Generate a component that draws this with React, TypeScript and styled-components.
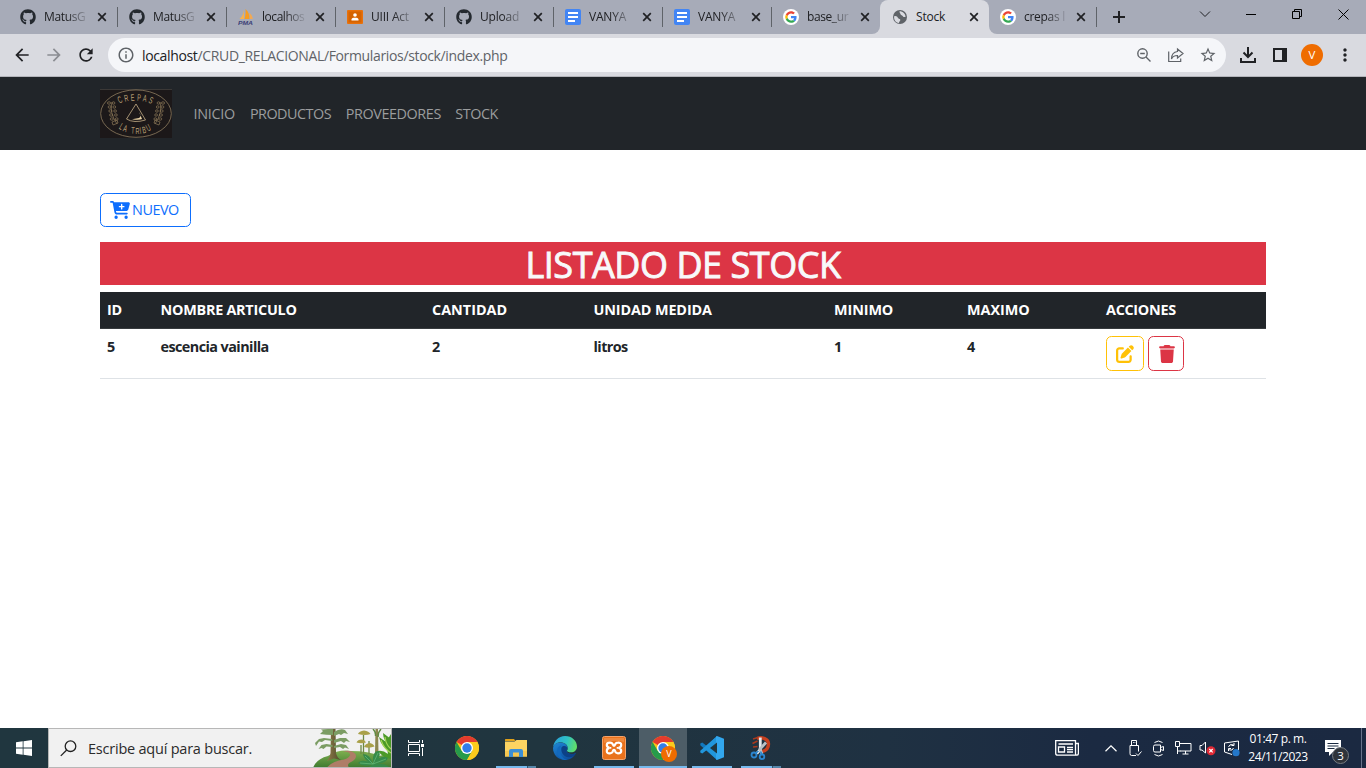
import React from 'react';
import styled, { createGlobalStyle, css } from 'styled-components';
import { FaGithub, FaCartPlus, FaPenToSquare, FaTrash } from 'react-icons/fa6';
import {
  MdArrowBack, MdArrowForward, MdRefresh, MdInfoOutline, MdStarBorder, MdMoreVert,
} from 'react-icons/md';

const GlobalStyle = createGlobalStyle`
  *, *::before, *::after { box-sizing: border-box; }
  html, body { margin: 0; padding: 0; }
  body {
    width: 1366px; height: 768px; overflow: hidden; background: #fff; color: #212529;
    font-family: "Open Sans", "Noto Sans", sans-serif;
  }
  svg { display: block; flex: none; }
`;

const Screen = styled.div`
  width: 1366px; height: 768px; display: flex; flex-direction: column; overflow: hidden;
`;

/* Browser chrome */
const TabStrip = styled.div`
  height: 34px; flex: none; display: flex; background: #d9dae0;
`;
const TabGroup = styled.div<{ $side?: 'left' | 'right' }>`
  display: flex; height: 34px; background: #a7abb8;
  ${p => p.$side === 'left' && css`width: 880px; padding-left: 9px; border-bottom-right-radius: 8px;`}
  ${p => p.$side === 'right' && css`flex: 1; border-bottom-left-radius: 8px;`}
`;
const TabItem = styled.div<{ $active?: boolean; $divider?: boolean; $last?: boolean }>`
  width: ${p => (p.$last ? 108 : 109)}px; height: 34px; padding: 0 9px 0 11px; display: flex; align-items: center; flex: none;
  color: #202124;
  background: ${p => (p.$active ? '#d9dae0' : 'transparent')};
  ${p => p.$active && css`border-radius: 8px 8px 0 0; padding-left: 12px;`}
  ${p => p.$divider && css`
    background: linear-gradient(#5f6369, #5f6369) right 7px / 1px 20px no-repeat;
  `}
`;
const ActiveBacking = styled.div`
  height: 34px; background: linear-gradient(#a7abb8 0 10px, #d9dae0 10px);
`;
const TabTitle = styled.span<{ $ls?: number; $w?: number }>`
  width: ${p => p.$w ?? 44}px; margin-left: 8px; white-space: nowrap; font-size: 12px; line-height: 20px;
  letter-spacing: ${p => p.$ls ?? -0.2}px;
  mask-image: linear-gradient(90deg, #000 50%, rgba(0, 0, 0, 0.15) 96%);
`;
const PlainTitle = styled(TabTitle)` mask-image: none; `;
const CloseSvg = styled.svg` margin-left: 8px; `;
const NewTab = styled.div` width: 44px; display: grid; place-items: center; `;
const WindowControls = styled.div`
  display: flex; margin-left: auto; height: 28px;
  & > span { width: 46px; display: grid; place-items: center; }
`;

const Toolbar = styled.div`
  height: 43px; flex: none; display: flex; align-items: center; background: #d9dae0;
  border-bottom: 1px solid #b3b4ba; padding: 0 11px 0 12px; color: #202124;
`;
const NavIcons = styled.div` display: flex; gap: 12px; width: 96px; `;
const Omnibox = styled.div`
  width: 1118px; height: 34px; border-radius: 17px; background: #f5f6f9; display: flex; align-items: center;
  padding: 0 9px 0 9px; color: #5f6368;
`;
const Url = styled.span`
  flex: 1; margin-left: 7px; padding-top: 1px; font-size: 14px; line-height: 20px; letter-spacing: -0.35px; white-space: nowrap;
  b { font-weight: 400; color: #202124; }
`;
const OmniActions = styled.div` display: flex; gap: 14px; `;
const BarActions = styled.div` display: flex; flex: 1; align-items: center; margin-left: 14px; `;
const PanelIcon = styled.svg` margin-left: 17px; `;
const Avatar = styled.span`
  width: 22px; height: 22px; margin: 0 auto 0 14px; border-radius: 50%; background: #ef6c00; color: #fff;
  font-size: 11.5px; line-height: 22px; text-align: center;
`;

/* Page */
const Navbar = styled.nav`
  height: 73px; flex: none; display: flex; align-items: center; padding: 0 100px; background: #212529;
`;
const NavLinks = styled.div` display: flex; margin-left: 21.5px; gap: 14.4px; `;
const NavLink = styled.a<{ $w: number; $ls: number }>`
  width: ${p => p.$w}px; white-space: nowrap; color: #9b9d9e; font-size: 14.4px; line-height: 22px; letter-spacing: ${p => p.$ls}px;
`;
const Main = styled.main` flex: 1; padding: 43px 100px 0; background: #fff; `;
const Button = styled.button<{ $tone: string; $w: number; $h: number }>`
  display: inline-flex; align-items: center; justify-content: flex-start; gap: 2px;
  width: ${p => p.$w}px; height: ${p => p.$h}px; padding: 0 0 0 9px; background: transparent;
  color: ${p => p.$tone}; border: 1px solid ${p => p.$tone}; border-radius: 5.4px;
  font: 400 14.4px/22px "Open Sans", sans-serif; letter-spacing: -0.45px;
`;
const Heading = styled.h1`
  margin: 15px 0 7px; height: 43px; background: #dc3545; color: #f8f9fa; text-align: center;
  font-size: 36px; line-height: 46px; font-weight: 500; letter-spacing: -0.45px;
  -webkit-text-stroke: 0.9px #f8f9fa;
`;
const Table = styled.div` width: 1166px; font-size: 14.4px; font-weight: 700; line-height: 22px; `;
const Row = styled.div<{ $head?: boolean }>`
  display: grid; grid-template-columns: 53.5px 271.5px 161.5px 240.5px 133px 139px 1fr;
  height: ${p => (p.$head ? 37 : 50)}px; padding-top: 7px;
  background: ${p => (p.$head ? '#212529' : '#fff')};
  color: ${p => (p.$head ? '#fff' : '#212529')};
  border-bottom: 1px solid ${p => (p.$head ? '#373b3e' : '#dee2e6')};
`;
const Cell = styled.div<{ $ls?: number }>`
  padding-left: 7px; white-space: nowrap; letter-spacing: ${p => p.$ls ?? -0.22}px;
`;
const Actions = styled(Cell)` display: flex; gap: 4px; `;

/* Taskbar */
const Taskbar = styled.footer`
  height: 40px; flex: none; display: flex; color: #fff;
  background: linear-gradient(90deg, #20363f 0, #20353f 40%, #1f3142 65%, #1b2a42 80%, #1b2941 100%);
`;
const StartButton = styled.div` width: 48px; display: grid; place-items: center; `;
const SearchBox = styled.div`
  width: 344px; height: 40px; display: flex; align-items: center; background: #f1f1f1; color: #2b2b2b;
  border: 1px solid #b7b7b7; padding-left: 11px; font-size: 14.5px; letter-spacing: -0.22px;
  span { flex: 1; margin-left: 11px; white-space: nowrap; }
`;
const TaskButton = styled.div<{ $line?: 'full' | 'wide' | 'multi'; $active?: boolean }>`
  width: 48px; margin-right: 1px; height: 40px; display: grid; place-items: center;
  background-color: ${p => (p.$active ? '#4d5d67' : 'transparent')};
  background-repeat: no-repeat;
  ${p => p.$line === 'full' && css`
    background-image: linear-gradient(#76b9ed, #76b9ed); background-position: 0 38px; background-size: 48px 2px;`}
  ${p => p.$line === 'wide' && css`
    background-image: linear-gradient(#76b9ed, #76b9ed); background-position: 4px 38px; background-size: 40px 2px;`}
  ${p => p.$line === 'multi' && css`
    background-image: linear-gradient(90deg, #76b9ed 31px, #33536a 31px 32px, #5586a9 32px);
    background-position: 4px 38px; background-size: 40px 2px;`}
`;
const TaskView = styled(TaskButton)` margin-right: 3px; `;
const BadgedIcon = styled.div` position: relative; `;
const ProfileBadge = styled.span`
  position: absolute; left: 10px; top: 10px; width: 16px; height: 16px; border-radius: 50%; background: #ef6c00;
  font-size: 9px; line-height: 16px; text-align: center;
`;
const Tray = styled.div` margin-left: auto; display: flex; align-items: center; `;
const TrayIcon = styled.span<{ $w?: number }>` width: ${p => p.$w ?? 24}px; display: grid; place-items: center; `;
const Clock = styled.div`
  width: 70px; text-align: center; font-size: 12px; line-height: 18px; letter-spacing: -0.42px; white-space: nowrap;
`;
const Notice = styled.div` position: relative; width: 48px; height: 40px; padding: 12px 0 0 12px; `;
const NoticeCount = styled.span`
  position: absolute; left: 19px; top: 19px; width: 17px; height: 17px; border-radius: 50%;
  background: #2f343b; border: 1px solid #777c82; font-size: 11.5px; line-height: 15px; text-align: center;
`;
const ShowDesktop = styled.div` width: 5px; height: 40px; border-left: 1px solid #68738a; `;

/* Icons */
const CloseIcon = () => (
  <CloseSvg width="12" height="12" viewBox="0 0 12 12">
    <path d="M2.200 2.200l7.600 7.600M9.800 2.200 2.200 9.800" stroke="#202124" strokeWidth="1.700" />
  </CloseSvg>
);
const GlobeIcon = () => (
  <svg width="16" height="16" viewBox="0 0 16 16">
    <circle cx="8" cy="8" r="7" fill="#5f6368" />
    <path d="M2.200 7.200C4 6.500 5.500 7.500 6 9c.5 1.200 2.500.5 2.300 2.200-.2 1.300-1.500 1.300-1.300 2.800-3.300-.4-5.400-3.300-4.800-6.800z" fill="#d9dae0" />
    <path d="M7.500 2.200c-.2 1.800 1 2 1.200 3.200.1 1 1.800.6 2.200 1.800.3.900 1.500 1 2.700.6-.2-3-2.600-5.600-6.100-5.600z" fill="#d9dae0" />
  </svg>
);
const GoogleIcon = () => (
  <svg width="16" height="16" viewBox="0 0 16 16">
    <circle cx="8" cy="8" r="8" fill="#fff" />
    <g transform="translate(2.2 2.2) scale(.242)">
      <path fill="#EA4335" d="M24 9.500c3.500 0 6.700 1.200 9.200 3.600l6.900-6.900C35.900 2.400 30.500 0 24 0 14.600 0 6.500 5.400 2.600 13.200l8 6.200C12.400 13.700 17.700 9.500 24 9.500z" />
      <path fill="#4285F4" d="M47 24.600c0-1.600-.2-3.100-.4-4.600H24v9h12.900c-.6 3-2.300 5.500-4.800 7.200l7.700 6C44.400 38 47 31.800 47 24.600z" />
      <path fill="#FBBC05" d="M10.500 28.600a14.500 14.500 0 0 1 0-9.200l-8-6.200a24 24 0 0 0 0 21.600l8-6.200z" />
      <path fill="#34A853" d="M24 48c6.500 0 11.900-2.100 15.900-5.800l-7.700-6c-2.200 1.500-4.900 2.300-8.200 2.300-6.300 0-11.600-4.200-13.500-9.900l-8 6.200C6.500 42.600 14.600 48 24 48z" />
    </g>
  </svg>
);
const DocsIcon = () => (
  <svg width="16" height="16" viewBox="0 0 16 16">
    <rect width="16" height="16" rx="2" fill="#4285f4" />
    <path d="M3 4h10M3 8h10M3 12h7" stroke="#fff" strokeWidth="2" />
  </svg>
);
const ClassroomIcon = () => (
  <svg width="16" height="16" viewBox="0 0 16 16">
    <rect y="1" width="16" height="14" rx="1" fill="#e8710a" />
    <rect x="1.500" y="2.500" width="13" height="11" fill="#d56300" />
    <circle cx="8" cy="6" r="1.800" fill="#fff" />
    <path d="M4.500 11.500v-1C4.500 9 6 8.700 8 8.700s3.500.3 3.500 1.800v1z" fill="#fff" />
  </svg>
);
const PmaIcon = () => (
  <svg width="16" height="16" viewBox="0 0 16 16">
    <path d="M6 1v9H1.500C4 8 5.300 5 6 1z" fill="#f6b24e" />
    <path d="M7.500 0c3 2.500 4 6 4 10h-5c1-3 1.300-6.500 1-10z" fill="#f89c1e" />
    <path d="M11 4c2.500 1 3.500 3.500 3.800 6H12c.2-2-.1-4-1-6z" fill="#f3a953" />
    <text x="0" y="15.500" fontSize="6" fontWeight="700" fontStyle="italic" fill="#3b3f77" textLength="15" lengthAdjust="spacingAndGlyphs" fontFamily="Liberation Sans, sans-serif">PMA</text>
  </svg>
);
const ChromeIcon = () => (
  <svg width="24" height="24" viewBox="0 0 24 24">
    <circle cx="12" cy="12" r="12" fill="#fbc116" />
    <path d="M12 12 1.600 6A12 12 0 0 1 22.400 6z" fill="#e33b2e" />
    <path d="M1.600 6A12 12 0 0 0 12 24l5.200-9L12 12 6.800 15z" fill="#269b4b" />
    <path d="M12 6h10.400A12 12 0 0 1 12 24l5.200-9z" fill="#fccb1d" />
    <circle cx="12" cy="12" r="6" fill="#fff" />
    <circle cx="12" cy="12" r="4.700" fill="#327de8" />
  </svg>
);
const FolderIcon = () => (
  <svg width="22" height="20" viewBox="0 0 22 20">
    <path d="M0 1.500Q0 1 .5 1H9l1.500 2H0z" fill="#e0a11a" />
    <path d="M0 3.500h9.500L11.500 2H22v16.500H0z" fill="#fcd462" />
    <path d="M0 13h22v5.500H0z" fill="#f6c750" />
    <path d="M4 19v-6q0-2 2-2h10q2 0 2 2v6h-4v-4.500H8V19z" fill="#3c8fd6" />
  </svg>
);
const EdgeIcon = () => (
  <svg width="24" height="24" viewBox="0 0 24 24">
    <defs>
      <linearGradient id="edgeTop" x1="0" y1=".3" x2="1" y2=".5">
        <stop offset="0" stopColor="#289fdc" /><stop offset=".55" stopColor="#2fc2c4" /><stop offset="1" stopColor="#62df66" />
      </linearGradient>
      <linearGradient id="edgeLow" x1="0" y1="0" x2=".7" y2="1">
        <stop offset="0" stopColor="#1f87d6" /><stop offset="1" stopColor="#0c4c9c" />
      </linearGradient>
    </defs>
    <path d="M0 12C1 7.500 5 6 8.500 6.500 12 7 14.500 9 14.500 12c0 1-1 1.700-1 2.800 0 2 2.500 3.200 5.500 3.200 1.500 0 3-.5 4-1C20.500 21.500 17 24 12 24 5 24 0 18.500 0 12z" fill="url(#edgeLow)" />
    <path d="M8.500 9.500C5.500 13 7 22 14 23.800 8 25 3.500 20 4 14.500 4.300 11.500 6 9.800 8.500 9.500z" fill="#1269bd" />
    <path d="M8.500 11.500c-1 4 1.500 9.500 7.500 9.700 3 .1 5.500-1.200 7-4.200-1 .5-2.500 1-4 1-3 0-5.500-1.200-5.500-3.200 0-1 1-1.800 1-2.800-1-2-4-3-6-.5z" fill="#0c4187" />
    <path d="M0 12C.5 5 5.500 0 12 0c7 0 12 5 12 10.500 0 3.500-2.500 5.800-6 5.800-2.500 0-4-.6-4-1.500 0-.8 1-1.300.8-2.800C14.500 8.500 11 6.300 7.500 6.300 3.500 6.300.5 8.800 0 12z" fill="url(#edgeTop)" />
  </svg>
);
const XamppIcon = () => (
  <svg width="24" height="24" viewBox="0 0 24 24">
    <rect x=".5" y=".5" width="23" height="23" rx="2" fill="#e9721c" stroke="#f3a36b" />
    <path d="M2 2h20v4Q12 3 2 7z" fill="#f39a55" opacity=".6" />
    <path d="M10.800 8.200Q10 6.700 8 6.700 4.800 6.700 4.800 9T7.500 11.800Q4.800 12.200 4.800 15T8 17.300q2.200 0 2.800-2 .4-1.500 1.200-1.500t1.200 1.500q.6 2 2.800 2 3.200 0 3.200-2.300T16.500 11.800Q19.200 11.400 19.200 9T16 6.700q-2 0-2.800 1.500-.4 1.600-1.200 1.600t-1.200-1.600z" fill="none" stroke="#fff" strokeWidth="2.200" />
    <path d="M7.500 11.800h1.800M16.500 11.800h-1.800" stroke="#fff" strokeWidth="1.800" />
  </svg>
);
const CodeIcon = () => (
  <svg width="24" height="24" viewBox="0 0 24 24">
    <path d="M17 .2 6.500 9.800 2.300 6.600.3 7.500v1.800L17 24z" fill="#1278bd" />
    <path d="M17 23.800 6.500 14.200l-4.200 3.200-2-.9v-1.800L17 0z" fill="#2196dc" />
    <path d="M17 0l7 2.800v18.400L17 24l-1-.7V.7z" fill="#32a7ee" />
    <path d="M17 6.500v11L10 12z" fill="#20363f" />
  </svg>
);
const SnipIcon = () => (
  <svg width="22" height="24" viewBox="0 0 22 24">
    <path d="M7 2.500C12 .8 18.500 2.500 18.500 8c0 4.500-3 6.800-6.500 7.500" fill="none" stroke="#c7401f" strokeWidth="3.400" />
    <path d="M3 3l5-1.500M2.500 7.500l5-2.500M3 11l4.500-.5" fill="none" stroke="#a9391e" strokeWidth="1.600" />
    <path d="M10.300 1.500v12l-3.500 4" fill="none" stroke="#e6eaed" strokeWidth="2.800" />
    <path d="M16 6.500 10 13l2 5" fill="none" stroke="#b9c0c5" strokeWidth="2.800" />
    <circle cx="4" cy="19" r="2.500" fill="none" stroke="#2b86d0" strokeWidth="1.800" />
    <circle cx="12" cy="20.800" r="2.300" fill="none" stroke="#2b86d0" strokeWidth="1.800" />
    <path d="M5.800 17.200 8.500 15M12 18.500l-1.500-3" fill="none" stroke="#2b86d0" strokeWidth="1.600" />
  </svg>
);

const topLetters: [string, number, number, number][] = [
  ['C', 19.5, 14.5, -26], ['R', 25, 12.8, -12], ['E', 31, 12, -5], ['P', 37, 11.8, 4], ['A', 42.5, 12.2, 10], ['S', 48, 13.5, 24],
];
const lowLetters: [string, number, number, number][] = [
  ['L', 18.5, 39.5, 30], ['A', 22.5, 42, 18], ['T', 31, 44.5, 4], ['R', 35.5, 45, 0], ['I', 40, 44.8, -6], ['B', 43, 44.5, -12], ['U', 48, 42.5, -28],
];
const CrepasLogo = () => (
  <svg width="72" height="49" viewBox="0 0 72 49">
    <rect width="72" height="49" fill="#1c1819" />
    <path d="M0 .5h72" stroke="#3b3836" />
    <ellipse cx="36" cy="24.600" rx="35.300" ry="23.700" fill="none" stroke="#8e7c60" strokeWidth=".8" />
    <g fill="#bfa57b" fontFamily="Liberation Sans, sans-serif" fontSize="9.500">
      {[...topLetters, ...lowLetters].map(([c, x, y, r]) => (
        <text key={c + x} transform={`translate(${x} ${y}) rotate(${r}) scale(.58 1)`}>{c}</text>
      ))}
    </g>
    <path d="M36 15 26.500 30Q34 34.500 45.500 31z" fill="none" stroke="#c4ad87" strokeWidth=".8" />
    <path d="M39 23q3 4 0 6l-7 1.300q7 1.200 10-.3z" fill="#ead3a5" />
    <g fill="none" stroke="#8e7a59" strokeWidth=".7">
      <path d="M12 13q-3 10 5 22M60 13q3 10-5 22" />
      {[14, 18, 22, 26, 30].map((y, i) => (
        <g key={y}>
          <ellipse cx={9 + i * 0.7} cy={y} rx="1.600" ry="1.200" />
          <ellipse cx={13.5 + i * 0.8} cy={y} rx="1.400" ry="1.200" />
          <ellipse cx={63 - i * 0.7} cy={y} rx="1.600" ry="1.200" />
          <ellipse cx={58.5 - i * 0.8} cy={y} rx="1.400" ry="1.200" />
        </g>
      ))}
      <path d="M12 33l5-2 1 3-5 2zM60 33l-5-2-1 3 5 2z" />
    </g>
  </svg>
);

const ForestArt = () => (
  <svg width="78" height="38" viewBox="0 0 78 38">
    <defs>
      <linearGradient id="hill" x1="0" y1="0" x2="0" y2="1">
        <stop offset="0" stopColor="#80b050" /><stop offset="1" stopColor="#3d7a2f" />
      </linearGradient>
      <linearGradient id="trunk"><stop offset="0" stopColor="#8f7a48" /><stop offset="1" stopColor="#4e4a2a" /></linearGradient>
    </defs>
    <path d="M0 39Q3 30 15 27 26 20 38 22 56 22 66 27L78 24V39z" fill="url(#hill)" />
    <path d="M30 22.500q8 0 7 4-2 4-11 5-8 2-12 7h22q-3-4 3-6 6-4 3-8-4-4-12-2z" fill="#ae7d67" />
    <path d="M18 0h4.500l.5 24q1 5 5 7l-7-1.500-7 2.500q3.500-4 3.500-8z" fill="url(#trunk)" />
    <g fill="#7b9c63">
      <path d="M20 6Q13 6 7 5L10 2 8 .500 15 0h5zM21 3Q27-1 32 1l3 4-4-1-3 2-2-1-5 2z" />
      <path d="M19.500 12 12 11l-3 2-3-.5L3 17l-1-3 4-4 5-1 8 1zM21 11l6-2h6l4 4-4-1-2 2-3-2-7 2z" />
      <path d="M19.500 18l-6-.5-3 2.500-2-1-3 1 3-4 5-1 6 1zM21 17l7-2 5 1 3 4-4-1.500-2 1.500-3-2-6 1z" />
    </g>
    <path d="M50.500 27V6M56 25V12M48 25V16" stroke="#6d8a45" strokeWidth="1.300" />
    <g fill="#a9a049"><path d="M45 5q1-3 6-3.500 5 .5 6.500 3.500-5 2-12.500 0zM43.500 13.500q1-3 5.500-3 3 .5 4 3-5 1.500-9.500 0zM51 18q1-3 5-4 4 0 5.500 3.500-5 2-10.500.5z" /></g>
    <path d="M62.500 0h2.500l.5 24H62z" fill="#8d8750" />
    <path d="M60 0q3 3 2.500 7M68 0q-3 3-3 8" stroke="#618a42" strokeWidth="1.500" fill="none" />
    <path d="M78 5q-6 7-3 20-5-4-10-3 5 7 13 8zM66 8q2 10 12 15l-2-8zM70 4q0 8 8 14V10z" fill="#4b9a28" />
    <path d="M68 11q3 9 10 13M72 8q1 8 6 12" stroke="#a5d557" strokeWidth="1.200" fill="none" />
    <g fill="#368b4b">
      <path d="M60 35Q57 25 50 25q1 7 10 10zM60 35q-1-14 6-13 3 7-6 13zM60 35q8-10 15-6-2 6-15 6zM60 35q-11-6-15-1 7 5 15 1zM60 35q12-1 16 3H56z" />
    </g>
    <path d="M60 35 52 27M60 35l5-11M60 35l13-5M60 35l-13-1" stroke="#63b573" strokeWidth=".8" />
  </svg>
);

const github = <FaGithub size={16} color="#24292f" />;
const tabsLeft: { icon: React.ReactNode; title: string; ls?: number }[] = [
  { icon: github, title: 'MatusG', ls: -0.35 },
  { icon: github, title: 'MatusG', ls: -0.35 },
  { icon: <PmaIcon />, title: 'localhos', ls: -0.45 },
  { icon: <ClassroomIcon />, title: 'UIII Act' },
  { icon: github, title: 'Upload' },
  { icon: <DocsIcon />, title: 'VANYA' },
  { icon: <DocsIcon />, title: 'VANYA' },
  { icon: <GoogleIcon />, title: 'base_ur', ls: -0.4 },
];

const links: [string, number, number][] = [
  ['INICIO', 42, -0.3], ['PRODUCTOS', 81.5, -0.5], ['PROVEEDORES', 95, -0.42], ['STOCK', 44, -0.42],
];
const headers: [string, number][] = [
  ['ID', -0.3], ['NOMBRE ARTICULO', -0.25], ['CANTIDAD', 0], ['UNIDAD MEDIDA', -0.12], ['MINIMO', -0.1], ['MAXIMO', -0.05], ['ACCIONES', -0.3],
];
const item = ['5', 'escencia vainilla', '2', 'litros', '1', '4'];

export default function App() {
  return (
    <Screen>
      <GlobalStyle />
      <TabStrip>
        <TabGroup $side="left">
          {tabsLeft.map((t, i) => (
            <TabItem key={i} $divider={i < 7}>
              {t.icon}<TabTitle $ls={t.ls}>{t.title}</TabTitle><CloseIcon />
            </TabItem>
          ))}
        </TabGroup>
        <ActiveBacking>
          <TabItem $active>
            <GlobeIcon /><PlainTitle>Stock</PlainTitle><CloseIcon />
          </TabItem>
        </ActiveBacking>
        <TabGroup $side="right">
          <TabItem $divider $last><GoogleIcon /><TabTitle $ls={-0.3} $w={43}>crepas l</TabTitle><CloseIcon /></TabItem>
          <NewTab><svg width="12" height="12"><path d="M0 6h12M6 0v12" stroke="#202124" strokeWidth="2" /></svg></NewTab>
          <WindowControls>
            <span><svg width="12" height="8" viewBox="0 0 12 8"><path d="M1 1.500l5 5 5-5" fill="none" stroke="#202124" /></svg></span>
            <span><svg width="10" height="10"><path d="M0 5.500h10" stroke="#000" /></svg></span>
            <span><svg width="10" height="10"><path d="M.5 2.500h7v7h-7zM2.500 2.500v-2h7v7h-2" fill="none" stroke="#000" /></svg></span>
            <span><svg width="11" height="11"><path d="M.5.5l10 10M10.500.5l-10 10" stroke="#000" /></svg></span>
          </WindowControls>
        </TabGroup>
      </TabStrip>

      <Toolbar>
        <NavIcons>
          <MdArrowBack size={20} /><MdArrowForward size={20} color="#8b8d92" /><MdRefresh size={20} />
        </NavIcons>
        <Omnibox>
          <MdInfoOutline size={18} />
          <Url><b>localhost</b>/CRUD_RELACIONAL/Formularios/stock/index.php</Url>
          <OmniActions>
            <svg width="18" height="18" viewBox="0 0 18 18" fill="none" stroke="#5f6368" strokeWidth="1.400">
              <circle cx="7.500" cy="7.500" r="4.700" /><path d="M11 11l4.500 4.500M5.200 7.500h4.600" />
            </svg>
            <svg width="18" height="18" viewBox="0 0 18 18" fill="none" stroke="#5f6368" strokeWidth="1.200">
              <path d="M1.700 5.500v10h12v-3" /><path d="M10.500 3l5.500 4.500-5.500 4.500V9.500C7.500 9.500 5.500 10.500 4.500 13c0-4.500 2-7 6-7.500z" />
            </svg>
            <MdStarBorder size={18} />
          </OmniActions>
        </Omnibox>
        <BarActions>
          <svg width="16" height="16" viewBox="0 0 16 16" fill="none" stroke="#202124" strokeWidth="2">
            <path d="M8 0v9.500M3.500 5.500 8 10l4.500-4.500M1 11v4h14v-4" />
          </svg>
          <PanelIcon width="14" height="14" viewBox="0 0 14 14">
            <path d="M1 1h12v12H1z" fill="none" stroke="#202124" strokeWidth="2" /><path d="M9 1h4v12H9z" fill="#202124" />
          </PanelIcon>
          <Avatar>V</Avatar>
          <MdMoreVert size={20} />
        </BarActions>
      </Toolbar>

      <Navbar>
        <CrepasLogo />
        <NavLinks>{links.map(([l, w, ls]) => <NavLink key={l} $w={w} $ls={ls}>{l}</NavLink>)}</NavLinks>
      </Navbar>

      <Main>
        <Button $tone="#0d6efd" $w={91} $h={34}><FaCartPlus size={20} />NUEVO</Button>
        <Heading>LISTADO DE STOCK</Heading>
        <Table>
          <Row $head>{headers.map(([h, ls]) => <Cell key={h} $ls={ls}>{h}</Cell>)}</Row>
          <Row>
            {item.map((v, i) => <Cell key={i} $ls={-0.57}>{v}</Cell>)}
            <Actions>
              <Button $tone="#ffc107" $w={38} $h={35}><FaPenToSquare size={18} /></Button>
              <Button $tone="#dc3545" $w={36} $h={35}><FaTrash size={18} /></Button>
            </Actions>
          </Row>
        </Table>
      </Main>

      <Taskbar>
        <StartButton>
          <svg width="16" height="16" viewBox="0 0 16 16" fill="#fff"><path d="M0 2.200 6.700 1.300v6.300H0zM7.500 1.200 16 0v7.600H7.500zM0 8.400h6.700v6.300L0 13.800zM7.500 8.400H16V16l-8.500-1.200z" /></svg>
        </StartButton>
        <SearchBox>
          <svg width="17" height="17" viewBox="0 0 17 17" fill="none" stroke="#222" strokeWidth="1.300"><circle cx="10.500" cy="6.200" r="5.300" /><path d="M6.700 10 .8 15.900" /></svg>
          <span>Escribe aquí para buscar.</span>
          <ForestArt />
        </SearchBox>
        <TaskView>
          <svg width="16" height="16" viewBox="0 0 16 16" fill="none" stroke="#fff"><path d="M.5 0v2.500h11V0M.5 16v-2.500h11V16M.5 4.500h11v7H.5zM14.500 0v3M14.500 8v8" /><path d="M13 4h3v3h-3z" fill="#fff" stroke="none" /></svg>
        </TaskView>
        <TaskButton><ChromeIcon /></TaskButton>
        <TaskButton $line="multi"><FolderIcon /></TaskButton>
        <TaskButton><EdgeIcon /></TaskButton>
        <TaskButton $line="wide"><XamppIcon /></TaskButton>
        <TaskButton $line="full" $active><BadgedIcon><ChromeIcon /><ProfileBadge>V</ProfileBadge></BadgedIcon></TaskButton>
        <TaskButton $line="wide"><CodeIcon /></TaskButton>
        <TaskButton $line="multi"><SnipIcon /></TaskButton>
        <Tray>
          <TrayIcon $w={64}>
            <svg width="24" height="16" viewBox="0 0 24 16" fill="none" stroke="#fff" strokeWidth="1.300"><path d="M20.500 3.500V.700H.7v12.500q0 2 2 2h19q1.700 0 1.700-2V3.500h-2.900v10q0 1.700 1.200 1.700M3.500 4h14.500M3.500 7h6v5h-6zM12 7.500h6M12 9.700h6M12 12h6" /></svg>
          </TrayIcon>
          <TrayIcon><svg width="12" height="7" viewBox="0 0 12 7"><path d="M.5 6.200 6 .8l5.500 5.400" fill="none" stroke="#fff" strokeWidth="1.200" /></svg></TrayIcon>
          <TrayIcon>
            <svg width="14" height="17" viewBox="0 0 14 17" fill="none" stroke="#fff"><path d="M3.500 5V.5h5V5M5 2.500h.8M6.500 2.500h.8M8 15.500H3.500q-1.500 0-1.500-2V5.500h8.500v6M8 13.500l2 2 3.500-4" /></svg>
          </TrayIcon>
          <TrayIcon>
            <svg width="12" height="17" viewBox="0 0 12 17" fill="none" stroke="#fff"><path d="M1.500 2.500Q5.500-.5 9.500 2.500M1.500 14.500q4 3 8 0M.5 6.500Q.5 5 2 5h5.500v7H2Q.5 12 .5 10.500zM7.500 7.500l3-1v4l-3-1z" /></svg>
          </TrayIcon>
          <TrayIcon>
            <svg width="17" height="14" viewBox="0 0 17 14" fill="none" stroke="#fff"><path d="M5 2.500h11v7.500H5M2.500 5.500V13M.5.500h4v5h-4zM2.500 10h3M10.500 10v3M7.500 13h6" /></svg>
          </TrayIcon>
          <TrayIcon>
            <svg width="17" height="15" viewBox="0 0 17 15"><path d="M1 4.500h2L6.500 1v11L3 9H1z" fill="none" stroke="#fff" /><circle cx="12" cy="9.700" r="4.500" fill="#df2935" /><path d="M10.300 8l3.400 3.400M13.700 8l-3.400 3.400" stroke="#fff" strokeWidth="1.200" /></svg>
          </TrayIcon>
          <TrayIcon>
            <svg width="17" height="17" viewBox="0 0 17 17" fill="none" stroke="#fff"><path d="M9 14.500 1.500 12V3L15.500 1v9M5.500 7q1-3 4-2.500l1.500 1M11 3v2.500H8.500M10.500 8q-1 3-4 2l-1-1M5.500 11V8.500H8" /><circle cx="13" cy="12.700" r="3.600" fill="#2477c9" stroke="none" /></svg>
          </TrayIcon>
          <Clock>01:47 p. m.<br />24/11/2023</Clock>
          <Notice>
            <svg width="17" height="16" viewBox="0 0 17 16"><path d="M0 0h16v12H8l-4 4v-4H0z" fill="#fff" /><path d="M2.500 3.500h11M2.500 6h11M2.500 8.500h7" stroke="#1b2a41" /></svg>
            <NoticeCount>3</NoticeCount>
          </Notice>
          <ShowDesktop />
        </Tray>
      </Taskbar>
    </Screen>
  );
}
